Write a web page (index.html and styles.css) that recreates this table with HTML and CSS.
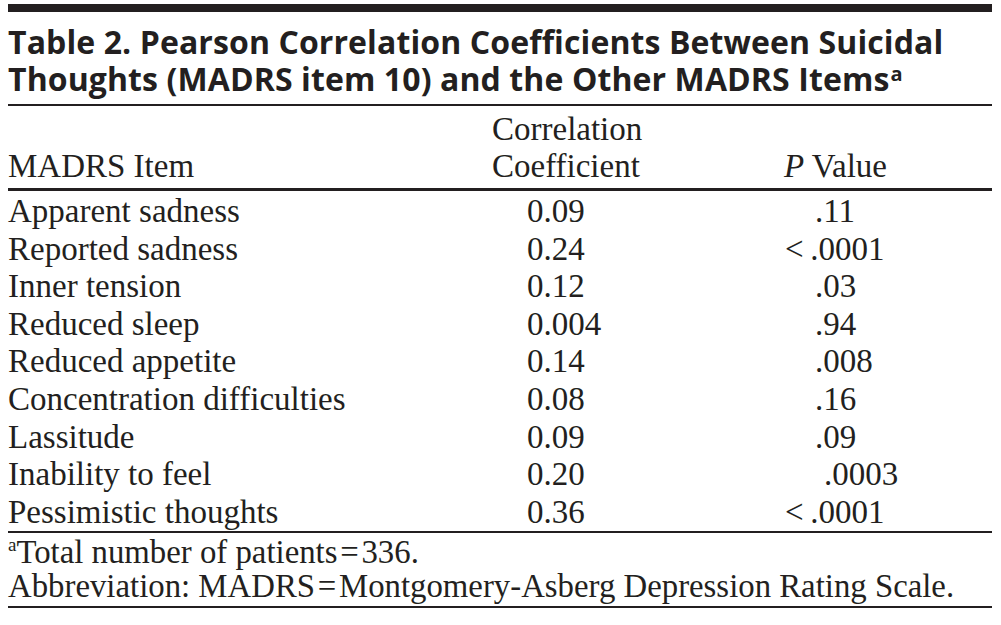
FILE: index.html
```html
<!DOCTYPE html>
<html lang="en">
<head>
<meta charset="utf-8">
<title>Table 2</title>
<link rel="stylesheet" href="styles.css">
</head>
<body>
<div class="page">
  <div class="topbar"></div>
  <h1 class="title"><span class="tline">Table 2. Pearson Correlation Coefficients Between Suicidal</span><span class="tline">Thoughts (MADRS item 10) and the Other MADRS Items<sup class="tsup">a</sup></span></h1>
  <table class="data">
    <colgroup>
      <col class="c1">
      <col class="c2">
      <col class="c3">
    </colgroup>
    <thead>
      <tr>
        <th class="h1">MADRS Item</th>
        <th class="h2">Correlation<br>Coefficient</th>
        <th class="h3"><i>P</i> Value</th>
      </tr>
    </thead>
    <tbody>
      <tr><td>Apparent sadness</td><td class="coef">0.09</td><td class="pv">.11</td></tr>
      <tr><td>Reported sadness</td><td class="coef">0.24</td><td class="pv lt">&lt;&thinsp;.0001</td></tr>
      <tr><td>Inner tension</td><td class="coef">0.12</td><td class="pv">.03</td></tr>
      <tr><td>Reduced sleep</td><td class="coef">0.004</td><td class="pv">.94</td></tr>
      <tr><td>Reduced appetite</td><td class="coef">0.14</td><td class="pv">.008</td></tr>
      <tr><td>Concentration difficulties</td><td class="coef">0.08</td><td class="pv">.16</td></tr>
      <tr><td>Lassitude</td><td class="coef">0.09</td><td class="pv">.09</td></tr>
      <tr><td>Inability to feel</td><td class="coef">0.20</td><td class="pv shift">.0003</td></tr>
      <tr><td>Pessimistic thoughts</td><td class="coef">0.36</td><td class="pv lt">&lt;&thinsp;.0001</td></tr>
    </tbody>
  </table>
  <div class="notes">
    <p><sup class="fsup">a</sup>Total number of patients&#8202;=&#8202;336.</p>
    <p>Abbreviation: MADRS&#8202;=&#8202;Montgomery-Asberg Depression Rating Scale.</p>
  </div>
</div>
</body>
</html>
```
FILE: styles.css
```css
html, body {
  margin: 0;
  padding: 0;
  background: #ffffff;
}

.page {
  width: 984px;
  margin: 0 0 0 8px;
  padding-top: 4px;
  color: #231f20;
}

.topbar {
  height: 8px;
  background: #231f20;
}

.title {
  margin: 11px 0 0 0;
  padding-bottom: 7px;
  border-bottom: 2px solid #231f20;
  font-family: "Open Sans", "Noto Sans", sans-serif;
  font-weight: 700;
  font-size: 32px;
  line-height: 37px;
  letter-spacing: 0.1px;
}

.tline {
  display: block;
  height: 37px;
  white-space: nowrap;
}

.tsup {
  font-size: 20px;
  line-height: 0;
  vertical-align: 10px;
  font-weight: 700;
  margin-left: 1px;
}

.data {
  width: 984px;
  border-collapse: collapse;
  font-family: "Liberation Serif", "Times New Roman", serif;
  font-size: 33px;
  table-layout: fixed;
}

.c1 { width: 484px; }
.c2 { width: 292px; }
.c3 { width: 208px; }

.data th {
  font-weight: 400;
  text-align: left;
  vertical-align: bottom;
  line-height: 37px;
  padding: 5px 0 3px 0;
  border-bottom: 3px solid #231f20;
}

.data td {
  padding: 0;
  line-height: 37.6px;
  white-space: nowrap;
}

.data tbody tr:first-child td {
  padding-top: 2px;
}

.data tbody tr:last-child td {
  border-bottom: 2px solid #231f20;
}

.coef { padding-left: 35px !important; }
.pv { padding-left: 31px !important; }
.pv.lt { padding-left: 1px !important; }
.pv.shift { padding-left: 40px !important; }

.notes {
  font-family: "Liberation Serif", "Times New Roman", serif;
  font-size: 32.8px;
  line-height: 34px;
  padding: 2px 0 3px 0;
  border-bottom: 2px solid #231f20;
}

.notes p {
  margin: 0;
  white-space: nowrap;
}

.fsup {
  font-size: 19px;
  line-height: 0;
  vertical-align: 12px;
}
```
